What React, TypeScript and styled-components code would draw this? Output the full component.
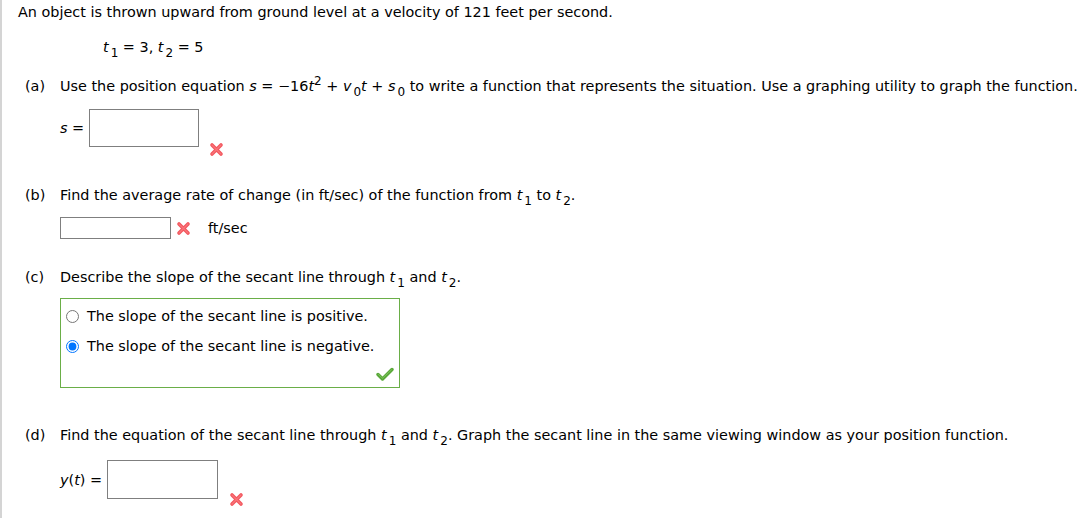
import React from 'react';
import styled, { createGlobalStyle } from 'styled-components';

const Global = createGlobalStyle`
  html, body {
    margin: 0;
    padding: 0;
    background: #fff;
  }
  body {
    font-family: Verdana, "DejaVu Sans", sans-serif;
    font-size: 14.4px;
    color: #000;
  }
`;

const Page = styled.div`
  border-left: 2px solid #d4d4d4;
  min-height: 518px;
  padding: 4px 0 0 16px;
  box-sizing: border-box;
  line-height: 16px;
`;

const Intro = styled.div`
  height: 16px;
`;

const Given = styled.div`
  margin: 19px 0 0 85px;
  height: 16px;
`;

const Part = styled.div<{ $top: number }>`
  margin-top: ${(p) => p.$top}px;
  margin-left: 7px;
`;

const Question = styled.div`
  display: flex;
  height: 16px;
  white-space: nowrap;
`;

const Letter = styled.span`
  width: 35px;
  flex-shrink: 0;
`;

const Answer = styled.div<{ $top: number }>`
  margin: ${(p) => p.$top}px 0 0 35px;
  display: flex;
  align-items: center;
`;

const Var = styled.i`
  font-style: italic;
`;

const Sub = styled.sub`
  font-size: 12px;
  line-height: 0;
  vertical-align: -5px;
  margin-left: 2px;
`;

const Sup = styled.sup`
  font-size: 12px;
  line-height: 0;
  vertical-align: 6px;
`;

const Label = styled.span`
  margin-right: 5px;
`;

const Box = styled.div<{ $w: number; $h: number }>`
  width: ${(p) => p.$w}px;
  height: ${(p) => p.$h}px;
  box-sizing: border-box;
  border: 1px solid #7f7f7f;
  background: #fff;
`;

const MarkSlot = styled.span<{ $drop: number; $gap: number }>`
  display: inline-flex;
  margin-left: ${(p) => p.$gap}px;
  align-self: ${(p) => (p.$drop ? 'flex-end' : 'center')};
  margin-bottom: ${(p) => -p.$drop}px;
`;

const Unit = styled.span`
  margin-left: 17px;
`;

const Choices = styled.div`
  margin: 13px 0 0 35px;
  width: 340px;
  height: 90px;
  box-sizing: border-box;
  border: 1px solid #6aae48;
  position: relative;
  padding-top: 9px;
`;

const Choice = styled.label`
  display: flex;
  align-items: center;
  height: 16px;
  margin-bottom: 14px;
  padding-left: 3px;
`;

const Radio = styled.input`
  width: 13px;
  height: 13px;
  margin: 0 8px 0 2px;
  accent-color: #0075ff;
`;

const Tick = styled.span`
  position: absolute;
  right: 5px;
  bottom: 6px;
  display: inline-flex;
`;

const Cross = () => (
  <svg width="15" height="15" viewBox="0 0 15 15">
    <path d="M3 3 L12 12 M12 3 L3 12" stroke="#f2555c" strokeWidth="3.6" strokeLinecap="round" />
    <path d="M3 3 L12 12 M12 3 L3 12" stroke="#ff8a8e" strokeWidth="1.2" strokeLinecap="round" opacity="0.6" />
  </svg>
);

const Check = () => (
  <svg width="18" height="14" viewBox="0 0 18 14">
    <path d="M2 7.5 L6.5 12 L16 2.5" fill="none" stroke="#5aa83a" strokeWidth="3.4" strokeLinecap="round" strokeLinejoin="round" />
    <path d="M2.5 7.5 L6.5 11.3 L15.5 2.8" fill="none" stroke="#86cc66" strokeWidth="1" strokeLinecap="round" opacity="0.7" />
  </svg>
);

const T = ({ n }: { n: number }) => (
  <>
    <Var>t</Var>
    <Sub>{n}</Sub>
  </>
);

export default function App() {
  return (
    <>
      <Global />
      <Page>
        <Intro>An object is thrown upward from ground level at a velocity of 121 feet per second.</Intro>
        <Given>
          <T n={1} /> = 3, <T n={2} /> = 5
        </Given>

        <Part $top={23}>
          <Question>
            <Letter>(a)</Letter>
            <span>
              Use the position equation <Var>s</Var> = −16<Var>t</Var>
              <Sup>2</Sup> + <Var>v</Var>
              <Sub>0</Sub>
              <Var>t</Var> + <Var>s</Var>
              <Sub>0</Sub> to write a function that represents the situation. Use a graphing utility to graph the function.
            </span>
          </Question>
          <Answer $top={15}>
            <Label>
              <Var>s</Var> =
            </Label>
            <Box $w={110} $h={38} />
            <MarkSlot $gap={10} $drop={10}>
              <Cross />
            </MarkSlot>
          </Answer>
        </Part>

        <Part $top={40}>
          <Question>
            <Letter>(b)</Letter>
            <span>
              Find the average rate of change (in ft/sec) of the function from <T n={1} /> to <T n={2} />.
            </span>
          </Question>
          <Answer $top={14}>
            <Box $w={111} $h={22} />
            <MarkSlot $gap={5} $drop={0}>
              <Cross />
            </MarkSlot>
            <Unit>ft/sec</Unit>
          </Answer>
        </Part>

        <Part $top={30}>
          <Question>
            <Letter>(c)</Letter>
            <span>
              Describe the slope of the secant line through <T n={1} /> and <T n={2} />.
            </span>
          </Question>
          <Choices>
            <Choice>
              <Radio type="radio" name="slope" readOnly />
              The slope of the secant line is positive.
            </Choice>
            <Choice>
              <Radio type="radio" name="slope" checked readOnly />
              The slope of the secant line is negative.
            </Choice>
            <Tick>
              <Check />
            </Tick>
          </Choices>
        </Part>

        <Part $top={39}>
          <Question>
            <Letter>(d)</Letter>
            <span>
              Find the equation of the secant line through <T n={1} /> and <T n={2} />. Graph the secant line in the same viewing window as your position function.
            </span>
          </Question>
          <Answer $top={17}>
            <Label>
              <Var>y</Var>(<Var>t</Var>) =
            </Label>
            <Box $w={111} $h={39} />
            <MarkSlot $gap={11} $drop={8}>
              <Cross />
            </MarkSlot>
          </Answer>
        </Part>
      </Page>
    </>
  );
}
